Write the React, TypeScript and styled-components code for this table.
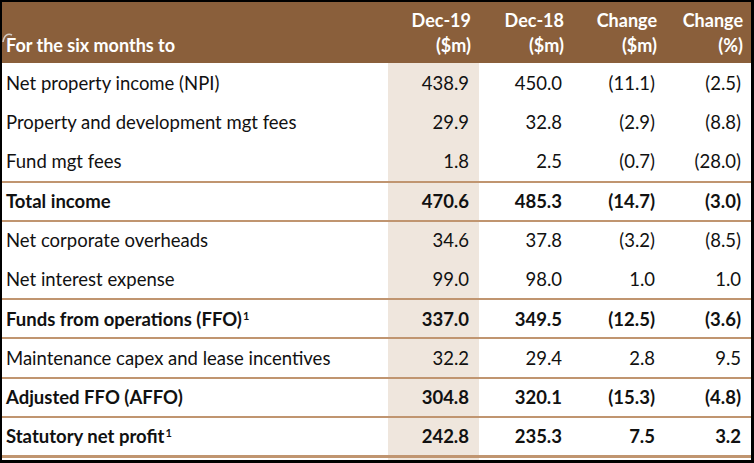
import styled, { createGlobalStyle } from "styled-components";

const Global = createGlobalStyle`
  html, body {
    margin: 0;
    padding: 0;
    background: #000;
  }
  body {
    font-family: Lato, "Open Sans", "Liberation Sans", sans-serif;
  }
`;

const Frame = styled.div`
  width: 754px;
  height: 463px;
  box-sizing: border-box;
  padding: 2px 3px 3px 2px;
  background: #000;
`;

const Sheet = styled.div`
  height: 100%;
  background: #fff;
  display: flex;
  flex-direction: column;
`;

const COLS = "386px 91px 93px 93px 86px";

const Head = styled.div`
  position: relative;
  display: grid;
  grid-template-columns: ${COLS};
  height: 61px;
  background: #8a5f3b;
  color: #fff;
  font-weight: 700;
  font-size: 18px;
  line-height: 25px;
`;

const HeadCell = styled.div<{ $label?: boolean }>`
  display: flex;
  flex-direction: column;
  justify-content: flex-end;
  align-items: ${(p) => (p.$label ? "flex-start" : "flex-end")};
  padding: 0 ${(p) => (p.$label ? "0" : "8px")} 5px ${(p) => (p.$label ? "4px" : "0")};
  text-align: right;
`;

const Curl = styled.svg`
  position: absolute;
  left: 0;
  top: 28px;
`;

const Row = styled.div<{ $line?: boolean; $bold?: boolean }>`
  display: grid;
  grid-template-columns: ${COLS};
  height: 39.2px;
  box-sizing: border-box;
  border-top: ${(p) => (p.$line ? "2px solid #c09570" : "none")};
  font-size: 18.5px;
  color: #111;
  font-weight: ${(p) => (p.$bold ? 700 : 400)};
`;

const Cell = styled.div<{ $shaded?: boolean }>`
  display: flex;
  align-items: center;
  justify-content: flex-end;
  padding-right: 10px;
  background: ${(p) => (p.$shaded ? "#efe6dd" : "transparent")};
`;

const Label = styled.div`
  display: flex;
  align-items: center;
  padding-left: 4px;
`;

const Sup = styled.sup`
  font-size: 11px;
  font-weight: 700;
  line-height: 0;
  position: relative;
  top: -3px;
  margin-left: 1px;
`;

const EndLine = styled.div`
  display: grid;
  grid-template-columns: ${COLS};
  flex: 1;
  border-top: 3px solid #c09570;
`;

type Line = {
  label: string;
  sup?: boolean;
  bold?: boolean;
  lineAbove?: boolean;
  v: [string, string, string, string];
};

const rows: Line[] = [
  { label: "Net property income (NPI)", v: ["438.9", "450.0", "(11.1)", "(2.5)"] },
  { label: "Property and development mgt fees", v: ["29.9", "32.8", "(2.9)", "(8.8)"] },
  { label: "Fund mgt fees", v: ["1.8", "2.5", "(0.7)", "(28.0)"] },
  { label: "Total income", bold: true, lineAbove: true, v: ["470.6", "485.3", "(14.7)", "(3.0)"] },
  { label: "Net corporate overheads", lineAbove: true, v: ["34.6", "37.8", "(3.2)", "(8.5)"] },
  { label: "Net interest expense", v: ["99.0", "98.0", "1.0", "1.0"] },
  { label: "Funds from operations (FFO)", sup: true, bold: true, lineAbove: true, v: ["337.0", "349.5", "(12.5)", "(3.6)"] },
  { label: "Maintenance capex and lease incentives", lineAbove: true, v: ["32.2", "29.4", "2.8", "9.5"] },
  { label: "Adjusted FFO (AFFO)", bold: true, lineAbove: true, v: ["304.8", "320.1", "(15.3)", "(4.8)"] },
  { label: "Statutory net profit", sup: true, bold: true, lineAbove: true, v: ["242.8", "235.3", "7.5", "3.2"] },
];

const App = () => (
  <Frame>
    <Global />
    <Sheet>
      <Head>
        <Curl width="12" height="14" viewBox="0 0 12 14">
          <path d="M1 12 C2 5 6 3 10 5" fill="none" stroke="#d2cbc4" strokeWidth="1.6" />
        </Curl>
        <HeadCell $label>For the six months to</HeadCell>
        <HeadCell>
          <span>Dec-19</span>
          <span>($m)</span>
        </HeadCell>
        <HeadCell>
          <span>Dec-18</span>
          <span>($m)</span>
        </HeadCell>
        <HeadCell>
          <span>Change</span>
          <span>($m)</span>
        </HeadCell>
        <HeadCell>
          <span>Change</span>
          <span>(%)</span>
        </HeadCell>
      </Head>
      {rows.map((r) => (
        <Row key={r.label} $line={r.lineAbove} $bold={r.bold}>
          <Label>
            {r.label}
            {r.sup && <Sup>1</Sup>}
          </Label>
          {r.v.map((x, i) => (
            <Cell key={i} $shaded={i === 0}>
              {x}
            </Cell>
          ))}
        </Row>
      ))}
      <EndLine>
        <div />
        <Cell $shaded />
      </EndLine>
    </Sheet>
  </Frame>
);

export default App;
